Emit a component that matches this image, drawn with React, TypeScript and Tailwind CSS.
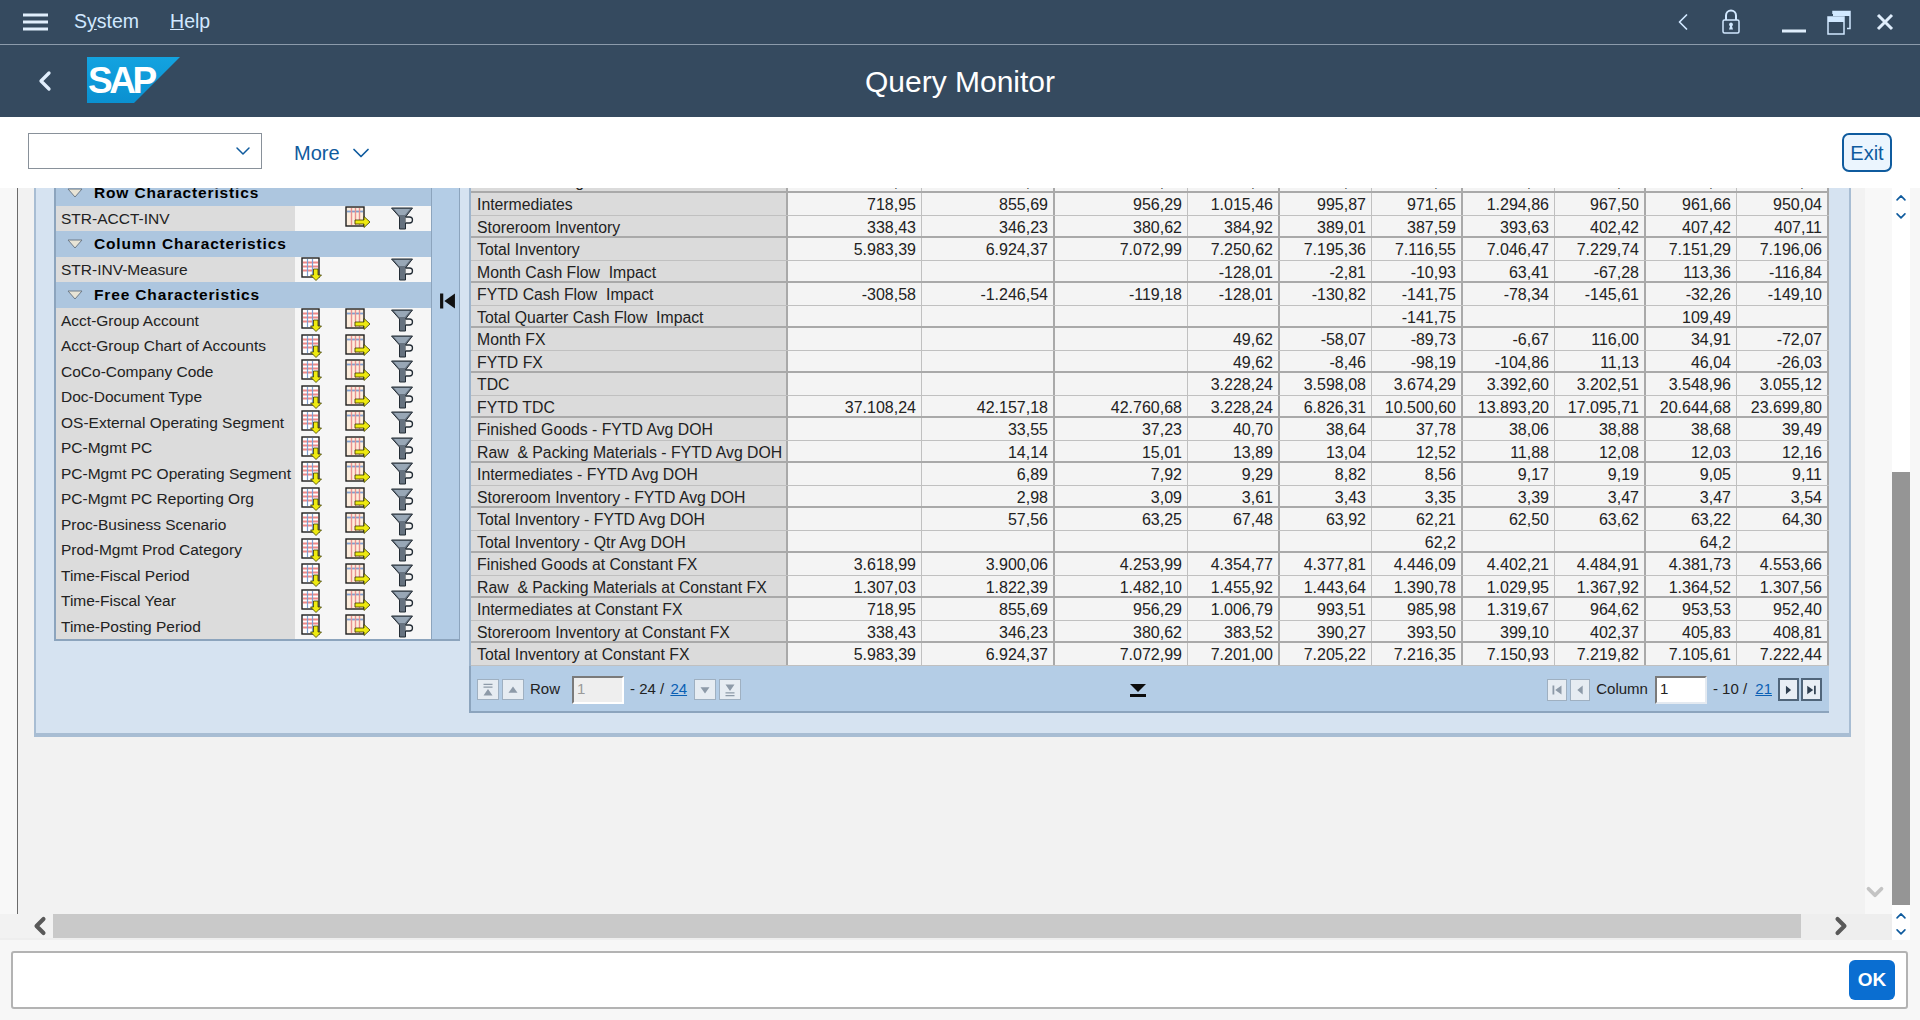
import { ChevronDown, ChevronLeft, ChevronRight, ChevronUp } from 'lucide-react';

const COLS = 'grid grid-rows-[minmax(0,1fr)] grid-cols-[317px_134px_133px_133px_92px_92px_91px_92px_91px_91px_92px]';

const ROWS: [string, string[]][] = [
  ['Raw & Packing Materials', ['1.307,03', '1.822,39', '1.482,10', '1.455,92', '1.443,64', '1.390,78', '1.029,95', '1.367,92', '1.364,52', '1.307,56']],
  ['Intermediates', ['718,95', '855,69', '956,29', '1.015,46', '995,87', '971,65', '1.294,86', '967,50', '961,66', '950,04']],
  ['Storeroom Inventory', ['338,43', '346,23', '380,62', '384,92', '389,01', '387,59', '393,63', '402,42', '407,42', '407,11']],
  ['Total Inventory', ['5.983,39', '6.924,37', '7.072,99', '7.250,62', '7.195,36', '7.116,55', '7.046,47', '7.229,74', '7.151,29', '7.196,06']],
  ['Month Cash Flow  Impact', ['', '', '', '-128,01', '-2,81', '-10,93', '63,41', '-67,28', '113,36', '-116,84']],
  ['FYTD Cash Flow  Impact', ['-308,58', '-1.246,54', '-119,18', '-128,01', '-130,82', '-141,75', '-78,34', '-145,61', '-32,26', '-149,10']],
  ['Total Quarter Cash Flow  Impact', ['', '', '', '', '', '-141,75', '', '', '109,49', '']],
  ['Month FX', ['', '', '', '49,62', '-58,07', '-89,73', '-6,67', '116,00', '34,91', '-72,07']],
  ['FYTD FX', ['', '', '', '49,62', '-8,46', '-98,19', '-104,86', '11,13', '46,04', '-26,03']],
  ['TDC', ['', '', '', '3.228,24', '3.598,08', '3.674,29', '3.392,60', '3.202,51', '3.548,96', '3.055,12']],
  ['FYTD TDC', ['37.108,24', '42.157,18', '42.760,68', '3.228,24', '6.826,31', '10.500,60', '13.893,20', '17.095,71', '20.644,68', '23.699,80']],
  ['Finished Goods - FYTD Avg DOH', ['', '33,55', '37,23', '40,70', '38,64', '37,78', '38,06', '38,88', '38,68', '39,49']],
  ['Raw  & Packing Materials - FYTD Avg DOH', ['', '14,14', '15,01', '13,89', '13,04', '12,52', '11,88', '12,08', '12,03', '12,16']],
  ['Intermediates - FYTD Avg DOH', ['', '6,89', '7,92', '9,29', '8,82', '8,56', '9,17', '9,19', '9,05', '9,11']],
  ['Storeroom Inventory - FYTD Avg DOH', ['', '2,98', '3,09', '3,61', '3,43', '3,35', '3,39', '3,47', '3,47', '3,54']],
  ['Total Inventory - FYTD Avg DOH', ['', '57,56', '63,25', '67,48', '63,92', '62,21', '62,50', '63,62', '63,22', '64,30']],
  ['Total Inventory - Qtr Avg DOH', ['', '', '', '', '', '62,2', '', '', '64,2', '']],
  ['Finished Goods at Constant FX', ['3.618,99', '3.900,06', '4.253,99', '4.354,77', '4.377,81', '4.446,09', '4.402,21', '4.484,91', '4.381,73', '4.553,66']],
  ['Raw  & Packing Materials at Constant FX', ['1.307,03', '1.822,39', '1.482,10', '1.455,92', '1.443,64', '1.390,78', '1.029,95', '1.367,92', '1.364,52', '1.307,56']],
  ['Intermediates at Constant FX', ['718,95', '855,69', '956,29', '1.006,79', '993,51', '985,98', '1.319,67', '964,62', '953,53', '952,40']],
  ['Storeroom Inventory at Constant FX', ['338,43', '346,23', '380,62', '383,52', '390,27', '393,50', '399,10', '402,37', '405,83', '408,81']],
  ['Total Inventory at Constant FX', ['5.983,39', '6.924,37', '7.072,99', '7.201,00', '7.205,22', '7.216,35', '7.150,93', '7.219,82', '7.105,61', '7.222,44']],
];

const FREE_CHARS = [
  'Acct-Group Account',
  'Acct-Group Chart of Accounts',
  'CoCo-Company Code',
  'Doc-Document Type',
  'OS-External Operating Segment',
  'PC-Mgmt PC',
  'PC-Mgmt PC Operating Segment',
  'PC-Mgmt PC Reporting Org',
  'Proc-Business Scenario',
  'Prod-Mgmt Prod Category',
  'Time-Fiscal Period',
  'Time-Fiscal Year',
  'Time-Posting Period',
];

function DownIcon() {
  return (
    <svg width="24" height="24" viewBox="0 0 24 24">
      <rect x="1" y="1" width="17" height="19" fill="#fff" stroke="#1f1f1f" strokeWidth="1.400" />
      <path d="M2 5.500h15M2 9.500h15M2 13.500h15" stroke="#e88" strokeWidth="1.800" />
      <path d="M6.500 2v17M11.500 2v17" stroke="#7f9fd0" strokeWidth="1.200" />
      <path d="M12.500 12h4.500v6h3.500l-5.500 5.500-5.500-5.500h3z" fill="#eeea10" stroke="#3a3a00" strokeWidth="0.800" />
    </svg>
  );
}

function RightIcon() {
  return (
    <svg width="26" height="24" viewBox="0 0 26 24">
      <rect x="1" y="1" width="18" height="19" fill="#fdeedd" stroke="#1f1f1f" strokeWidth="1.400" />
      <path d="M2 5.500h16" stroke="#7f9fd0" strokeWidth="1.800" />
      <path d="M6.500 2v17M10.500 2v17M14.500 2v17" stroke="#e89090" strokeWidth="1.400" />
      <path d="M10 14h9v-3.500l6 5.500-6 5.500v-3.500h-9z" fill="#eeea10" stroke="#3a3a00" strokeWidth="0.800" />
    </svg>
  );
}

function FilterIcon() {
  return (
    <svg width="24" height="24" viewBox="0 0 24 24">
      <path d="M1.500 2h21l-7 9v12h-6v-12z" fill="#66727f" stroke="#232c35" strokeWidth="1" />
      <path d="M4 3h16l-5 6h-6z" fill="#98a7b6" />
      <path d="M15.500 11h4a2.500 2.500 0 0 1 0 6h-4" fill="#f4f4f4" stroke="#232c35" strokeWidth="1.300" />
    </svg>
  );
}

function Triangle() {
  return (
    <svg width="16" height="10" viewBox="0 0 16 10" className="shrink-0">
      <path d="M1 1h14l-7 8z" fill="#e8e4d6" stroke="#6d7a88" strokeWidth="1" />
    </svg>
  );
}

function TreeHeader({ label }: { label: string }) {
  return (
    <div className="flex h-[25.500px] items-center gap-[11px] bg-[#adc6df] pl-[11px] text-[15.500px] font-bold text-black">
      <Triangle />
      <span className="tracking-[0.85px] whitespace-pre">{label}</span>
    </div>
  );
}

function TreeRow({ label, down = true, right = true }: { label: string; down?: boolean; right?: boolean }) {
  return (
    <div className="flex h-[25.500px] items-center">
      <div className="h-full w-[239px] bg-[#dcdcdc] pl-[5px] leading-[25px] whitespace-nowrap">{label}</div>
      <div className="grid h-full flex-1 grid-cols-[44px_45px_1fr] items-center bg-[#f6f6f6] pl-[6px]">
        <div>{down && <DownIcon />}</div>
        <div>{right && <RightIcon />}</div>
        <div><FilterIcon /></div>
      </div>
    </div>
  );
}

function PageButton({ dir, active }: { dir: 'first' | 'prev' | 'next' | 'last' | 'top' | 'up' | 'down' | 'bottom'; active?: boolean }) {
  const color = active ? '#2f3f50' : '#8d9aa8';
  const shapes: Record<string, string> = {
    first: 'M5 5h2v10h-2zM15 5v10l-7-5z',
    prev: 'M13 5v10l-6-5z',
    next: 'M7 5v10l6-5z',
    last: 'M15 5h-2v10h2zM5 5v10l7-5z',
    top: 'M5 3h10v1.500h-10zM5 6h10v1.500h-10zM10 9l5 7h-10z',
    up: 'M10 6l5 7h-10z',
    down: 'M10 14l5-7h-10z',
    bottom: 'M10 11l5-7h-10zM5 12.500h10v1.500h-10zM5 15.500h10v1.500h-10z',
  };
  const wide = dir === 'top' || dir === 'up' || dir === 'down' || dir === 'bottom';
  return (
    <div className={active
      ? 'flex h-[23px] w-[21px] items-center justify-center border-2 border-[#50657a] bg-[#e8eef5]'
      : wide
        ? 'flex h-[21px] w-[22px] items-center justify-center border border-[#9fb0c1] bg-[#e6ecf2]'
        : 'flex h-[22px] w-[20px] items-center justify-center border border-[#9fb0c1] bg-[#e6ecf2]'}>
      <svg width="18" height="18" viewBox="0 0 20 20">
        <path d={shapes[dir]} fill={color} />
      </svg>
    </div>
  );
}

function PageInput({ value, disabled }: { value: string; disabled?: boolean }) {
  return (
    <div className={disabled
      ? 'flex h-[28px] w-[52px] items-center border-2 border-t-[#7a7a7a] border-r-white border-b-white border-l-[#7a7a7a] bg-[#eeeeee] pl-[3px] text-[#9a9a9a]'
      : 'flex h-[28px] w-[52px] items-center border-2 border-t-[#7a7a7a] border-r-[#e4eaf1] border-b-[#e4eaf1] border-l-[#7a7a7a] bg-white pl-[3px]'}>
      {value}
    </div>
  );
}

function DataTable() {
  return (
    <div className="w-[1360px] shrink-0 text-[16px] text-[#222]">
      <div className="border-l-2 border-[#9db4cc] bg-[#f4f4f4]">
        {ROWS.map(([label, values], r) => (
          <div
            key={r}
            className={r === 0
              ? `${COLS} h-[23px] border-b-2 border-[#a9a9a9] leading-[23px]`
              : r % 2 === 0
                ? `${COLS} h-[22.500px] border-b-2 border-[#a9a9a9] leading-[23px]`
                : `${COLS} h-[22.500px] border-b border-[#c0c0c0] leading-[23px]`}
          >
            <div className="overflow-hidden border-r-2 border-[#a9a9a9] bg-[#dbdbdb] pl-[6px] text-[15.800px] whitespace-pre">{label}</div>
            {values.map((v, c) => (
              <div
                key={c}
                className={c % 2 === 0
                  ? 'border-r border-[#c0c0c0] pr-[5px] text-right'
                  : 'border-r-2 border-[#a9a9a9] pr-[5px] text-right'}
              >
                {v}
              </div>
            ))}
          </div>
        ))}
      </div>
      <div className="flex h-[47px] items-center justify-between border-b-2 border-l-2 border-[#8ca4bd] bg-[#b4cde6] pt-[3px] pr-[7px] pl-[6px] text-[15px]">
        <div className="flex items-center">
          <PageButton dir="top" />
          <div className="w-[3px]" />
          <PageButton dir="up" />
          <span className="mr-[12px] ml-[6px]">Row</span>
          <PageInput value="1" disabled />
          <span className="ml-[6px]">- 24 /&nbsp;</span>
          <span className="ml-[2px] text-[#0a5fb4] underline">24</span>
          <div className="w-[7px]" />
          <PageButton dir="down" />
          <div className="w-[3px]" />
          <PageButton dir="bottom" />
        </div>
        <svg width="18" height="14" viewBox="0 0 18 14" className="mt-[3px] -ml-[12px]">
          <path d="M1 0h16l-8 8zM1 10h16v3h-16z" fill="#0d0d0d" />
        </svg>
        <div className="flex items-center">
          <PageButton dir="first" />
          <div className="w-[3px]" />
          <PageButton dir="prev" />
          <span className="mr-[7px] ml-[6px]">Column</span>
          <PageInput value="1" />
          <span className="ml-[6px]">- 10 /&nbsp;</span>
          <span className="ml-[4px] text-[#0a5fb4] underline">21</span>
          <div className="w-[6px]" />
          <PageButton dir="next" active />
          <div className="w-[2px]" />
          <PageButton dir="last" active />
        </div>
      </div>
    </div>
  );
}

function Tree() {
  return (
    <div className="mt-[10px] flex w-[406px] shrink-0">
      <div className="w-[377px] border-b-2 border-l-2 border-[#8ca4bd] bg-[#f6f6f6] text-[15.500px] text-[#222]">
        <TreeHeader label="Row Characteristics" />
        <TreeRow label="STR-ACCT-INV" down={false} />
        <TreeHeader label="Column Characteristics" />
        <TreeRow label="STR-INV-Measure" right={false} />
        <TreeHeader label="Free Characteristics" />
        {FREE_CHARS.map((c) => (
          <TreeRow key={c} label={c} />
        ))}
      </div>
      <div className="flex h-[461px] w-[29px] items-start justify-center border-x border-b-2 border-[#8ca4bd] bg-[#b4cde6] pt-[112px] pl-[3px]">
        <svg width="17" height="18" viewBox="0 0 16 16">
          <path d="M1 1h3v14h-3zM15 1v14l-10-7z" fill="#111" />
        </svg>
      </div>
    </div>
  );
}

export default function App() {
  return (
    <div className="flex h-[1020px] w-[1920px] flex-col overflow-hidden bg-[#f7f7f7] font-['Liberation_Sans',Arial,sans-serif]">
      {/* shell bar */}
      <div className="h-[117px] shrink-0 bg-[#354a5f]">
        <div className="flex h-[45px] items-center border-b border-[#8c9bab] pr-[26px] pl-[23px] text-[19.500px] text-[#d1e8ff]">
          <svg width="25" height="18" viewBox="0 0 25 18" className="mr-[26px]">
            <path d="M0 2h25M0 9h25M0 16h25" stroke="#e0eefc" strokeWidth="3" />
          </svg>
          <span className="mr-[31px]">S<span className="underline">y</span>stem</span>
          <span><span className="underline">H</span>elp</span>
          <div className="flex-1" />
          <ChevronLeft size={28} strokeWidth={1.5} className="mr-[24px] text-[#d1e8ff]" />
          <svg width="20" height="26" viewBox="0 0 20 26" className="mr-[41px]">
            <path d="M5 11V6.500a5 5 0 0 1 10 0V11" fill="none" stroke="#d1e8ff" strokeWidth="2" />
            <rect x="2" y="11" width="16" height="13" rx="1.500" fill="#354a5f" stroke="#d1e8ff" strokeWidth="1.500" />
            <path d="M10 13.500a2 2 0 0 1 1 3.700l1 3.300h-4l1-3.300a2 2 0 0 1 1-3.700z" fill="#d1e8ff" />
          </svg>
          <svg width="24" height="24" viewBox="0 0 24 24" className="mr-[21px]">
            <path d="M0 21h24" stroke="#e0eefc" strokeWidth="3" />
          </svg>
          <svg width="24" height="25" viewBox="0 0 24 25" className="mr-[25px]">
            <path d="M6 4V1.500h17v17h-3" fill="none" stroke="#d1e8ff" strokeWidth="1.500" />
            <rect x="6" y="1" width="17" height="5" fill="#d1e8ff" />
            <rect x="1" y="7" width="16" height="17" fill="#354a5f" stroke="#d1e8ff" strokeWidth="1.500" />
            <rect x="1" y="7" width="16" height="5" fill="#d1e8ff" />
          </svg>
          <svg width="18" height="18" viewBox="0 0 18 18">
            <path d="M2 2l14 14M16 2L2 16" stroke="#e0eefc" strokeWidth="3" />
          </svg>
        </div>
        <div className="relative flex h-[72px] items-center pl-[29px]">
          <ChevronLeft size={32} strokeWidth={2.500} className="mr-[26px] text-[#e0eefc]" />
          <svg width="94" height="46" viewBox="0 0 94 46" className="-mt-[2px]">
            <defs>
              <linearGradient id="sapBlue" x1="0" y1="0" x2="0" y2="1">
                <stop offset="0" stopColor="#13a3e0" />
                <stop offset="1" stopColor="#0a90d0" />
              </linearGradient>
            </defs>
            <path d="M0 0h93L47 46H0z" fill="url(#sapBlue)" />
            <text x="1" y="36" fill="#fff" fontFamily="'Liberation Sans', Arial, sans-serif" fontWeight="700" fontSize="37" letterSpacing="-3.500">SAP</text>
          </svg>
          <div className="absolute inset-x-0 top-0 flex h-full items-center justify-center text-[30px] text-white">Query Monitor</div>
        </div>
      </div>

      {/* toolbar */}
      <div className="flex h-[71px] shrink-0 items-center bg-white pr-[28px] pl-[28px] text-[#0f5b9e]">
        <div className="mr-[32px] -mt-[3px] flex h-[36px] w-[234px] items-center justify-end border border-[#89919a] pr-[6px]">
          <ChevronDown size={24} strokeWidth={1.500} />
        </div>
        <span className="mr-[7px] text-[20px]">More</span>
        <ChevronDown size={28} strokeWidth={1.500} />
        <div className="flex-1" />
        <div className="flex h-[39px] w-[50px] items-center justify-center rounded-[7px] border-2 border-[#0f5b9e] bg-[#ebf5fe] text-[20px]">Exit</div>
      </div>

      {/* content */}
      <div className="flex min-h-0 flex-1">
        <div className="flex min-w-0 flex-1 flex-col">
          <div className="flex min-h-0 flex-1 bg-[#f2f2f2]">
            <div className="w-[18px] shrink-0 border-r border-[#6b6b6b] bg-[#f8f8f8]" />
            <div className="min-w-0 flex-1 overflow-hidden pl-[16px]">
              <div className="-mt-[18px] flex w-[1817px] items-start gap-[9px] border-x-2 border-b-4 border-[#a8bdd3] bg-[#d6e3f1] pr-[16px] pb-[20px] pl-[18px]">
                <Tree />
                <DataTable />
              </div>
            </div>
            <div className="flex w-[27px] shrink-0 flex-col items-center justify-end bg-[#f8f8f8] pr-[7px] pb-[9px] text-[#c4c4c4]">
              <ChevronDown size={26} strokeWidth={3.500} />
            </div>
          </div>
          <div className="flex h-[26px] shrink-0 items-center bg-[#eeeeee] pb-[2px]">
            <div className="flex h-full w-[53px] items-center justify-end bg-[#f2f2f2] text-[#595959]">
              <ChevronLeft size={28} strokeWidth={3.500} className="-mr-[1px]" />
            </div>
            <div className="h-full w-[1748px] bg-[#c9c9c9]" />
            <div className="flex h-full flex-1 items-center pl-[26px] text-[#595959]">
              <ChevronRight size={28} strokeWidth={3.500} />
            </div>
          </div>
        </div>
        <div className="flex w-[18px] shrink-0 flex-col items-center bg-white text-[#0f5b9e]">
          <ChevronUp size={16} strokeWidth={2.500} className="mt-[2px]" />
          <ChevronDown size={16} strokeWidth={2.500} className="mt-[2px]" />
          <div className="mt-[248px] h-[433px] w-full shrink-0 bg-[#959595]" />
          <ChevronUp size={16} strokeWidth={2.500} className="mt-[3px]" />
          <ChevronDown size={16} strokeWidth={2.500} className="mt-[1px]" />
        </div>
        <div className="w-[10px] shrink-0 bg-[#f7f7f7]" />
      </div>

      {/* command field */}
      <div className="flex h-[80px] shrink-0 items-center bg-[#f7f7f7] pr-[12px] pl-[11px]">
        <div className="flex h-[58px] w-full items-center justify-end rounded-[3px] border-2 border-[#b3b3b3] bg-white pr-[11px]">
          <div className="flex h-[40px] w-[46px] items-center justify-center rounded-[6px] bg-[#0a6ed1] text-[19px] font-bold text-white">OK</div>
        </div>
      </div>
    </div>
  );
}
